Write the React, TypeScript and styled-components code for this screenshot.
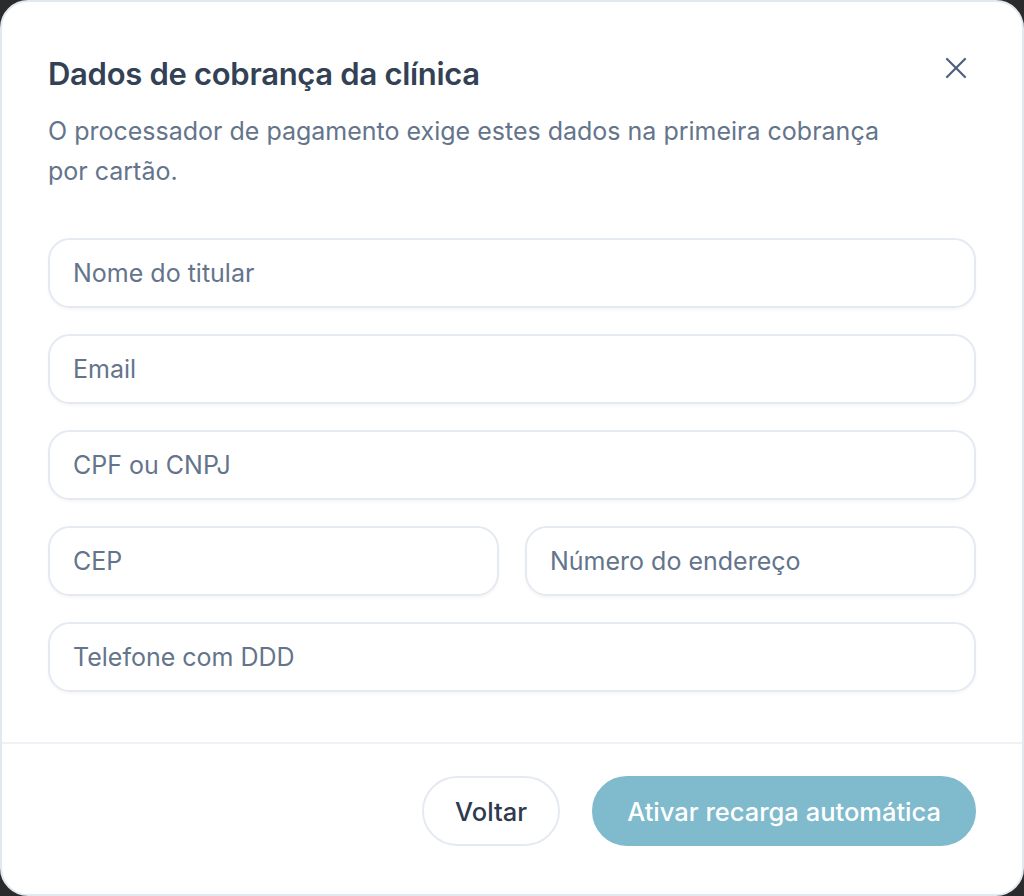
import React from 'react';
import styled, { createGlobalStyle } from 'styled-components';

const GlobalStyle = createGlobalStyle`
    html, body {
        margin: 0;
        padding: 0;
        background: #2b2b2b;
    }
    * {
        box-sizing: border-box;
    }
`

const Modal = styled.div`
    width: 1024px;
    height: 896px;
    background: #ffffff;
    border: 2px solid #e2e8f0;
    border-radius: 28px;
    display: flex;
    flex-direction: column;
    font-family: Inter, "Noto Sans", sans-serif;
`
const Body = styled.div`
    padding: 46px 46px 0 46px;
    display: flex;
    flex-direction: column;
    flex: 1;
`
const Header = styled.div`
    display: flex;
    justify-content: space-between;
    align-items: flex-start;
`
const Title = styled.h2`
    margin: 7px 0 0 0;
    font-size: 31px;
    font-weight: 600;
    color: #334155;
    letter-spacing: -0.3px;
`
const CloseButton = styled.button`
    border: none;
    background: none;
    padding: 0;
    margin: 6px 6px 0 0;
    width: 28px;
    height: 28px;
    display: flex;
    align-items: center;
    justify-content: center;
    color: #4b5f7a;
    cursor: pointer;
`
const Subtitle = styled.p`
    margin: 19px 0 0 0;
    font-size: 25px;
    line-height: 40px;
    color: #64748b;
    max-width: 860px;
`
const Fields = styled.div`
    margin-top: 47px;
    display: flex;
    flex-direction: column;
    gap: 26px;
`
const Row = styled.div`
    display: grid;
    grid-template-columns: 1fr 1fr;
    gap: 26px;
`
const Input = styled.input`
    width: 100%;
    height: 70px;
    border: 2px solid #e5eaf2;
    border-radius: 22px;
    padding: 0 23px;
    font-family: Inter, "Noto Sans", sans-serif;
    font-size: 25px;
    color: #334155;
    background: #ffffff;
    box-shadow: 0 2px 3px rgba(15, 23, 42, 0.04);
    outline: none;
    &::placeholder {
        color: #64748b;
    }
`
const Divider = styled.div`
    height: 2px;
    background: #eef2f6;
`
const Footer = styled.div`
    height: 150px;
    display: flex;
    justify-content: flex-end;
    align-items: flex-start;
    gap: 32px;
    padding: 32px 46px 0 0;
`
const Button = styled.button<{ primary?: boolean }>`
    height: 70px;
    border-radius: 35px;
    padding: 0 ${p => p.primary ? '33px' : '31px'};
    font-family: Inter, "Noto Sans", sans-serif;
    font-size: 25.5px;
    font-weight: 500;
    cursor: pointer;
    border: 2px solid ${p => p.primary ? '#7fbacd' : '#e5eaf2'};
    background: ${p => p.primary ? '#7fbacd' : '#ffffff'};
    color: ${p => p.primary ? '#ffffff' : '#2d3a4f'};
`

const CloseIcon = () => (
    <svg width="22" height="22" viewBox="0 0 22 22" fill="none" stroke="currentColor" strokeWidth="2.2" strokeLinecap="round">
        <line x1="2" y1="2" x2="20" y2="20" />
        <line x1="20" y1="2" x2="2" y2="20" />
    </svg>
)

export default function App() {
    return (
        <>
            <GlobalStyle />
            <Modal>
                <Body>
                    <Header>
                        <Title>{'Dados de cobrança da clínica'}</Title>
                        <CloseButton aria-label="Fechar"><CloseIcon /></CloseButton>
                    </Header>
                    <Subtitle>{'O processador de pagamento exige estes dados na primeira cobrança por cartão.'}</Subtitle>
                    <Fields>
                        <Input type="text" placeholder="Nome do titular" />
                        <Input type="email" placeholder="Email" />
                        <Input type="text" placeholder="CPF ou CNPJ" />
                        <Row>
                            <Input type="text" placeholder="CEP" />
                            <Input type="text" placeholder="Número do endereço" />
                        </Row>
                        <Input type="tel" placeholder="Telefone com DDD" />
                    </Fields>
                </Body>
                <Divider />
                <Footer>
                    <Button>{'Voltar'}</Button>
                    <Button primary>{'Ativar recarga automática'}</Button>
                </Footer>
            </Modal>
        </>
    );
}
